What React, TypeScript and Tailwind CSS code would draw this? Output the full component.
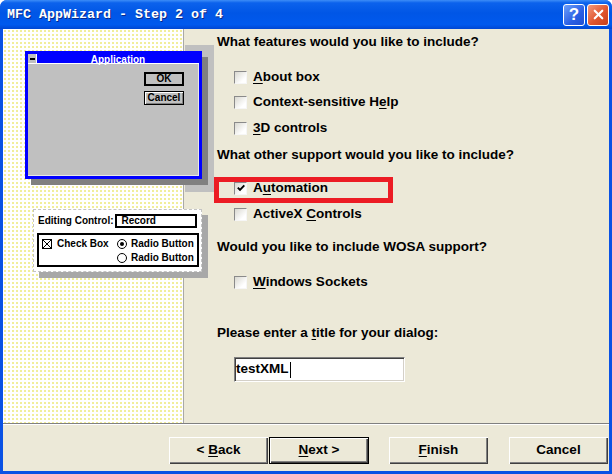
import type { ReactNode } from "react";
import { X } from "lucide-react";

const ui = "font-['Liberation_Sans',Arial,sans-serif] font-bold text-[13.5px] text-black";
const pixel = "font-['Liberation_Sans',Arial,sans-serif] font-bold text-[10px] leading-none text-black";

function CheckBox({ checked = false }: { checked?: boolean }) {
  return (
    <span className="flex h-[13px] w-[13px] shrink-0 items-center justify-center border border-t-[#8a8a8a] border-l-[#8a8a8a] border-r-[#f6f6f6] border-b-[#f6f6f6] bg-[linear-gradient(135deg,#d9d8d0,#ffffff_75%)]">
      {checked && (
        <svg viewBox="0 0 8 8" className="h-[8px] w-[8px]">
          <path d="M0.8 3.6 L3 5.9 L7.3 1.3" fill="none" stroke="#000" strokeWidth="1.9" />
        </svg>
      )}
    </span>
  );
}

function Option({ children, checked, className = "" }: { children: ReactNode; checked?: boolean; className?: string }) {
  return (
    <div className={`relative ml-[17px] flex h-[20px] items-center gap-[6px] ${className}`}>
      <CheckBox checked={checked} />
      <span>{children}</span>
    </div>
  );
}

function WizardButton({ children, main = false, className = "" }: { children: ReactNode; main?: boolean; className?: string }) {
  return (
    <button
      type="button"
      className={`flex h-[27px] items-center justify-center bg-[#ece9d8] ${
        main
          ? "w-[100px] border border-black shadow-[inset_1px_1px_0_#ffffff,inset_-1px_-1px_0_#404040,inset_-2px_-2px_0_#808080]"
          : "w-[99px] shadow-[inset_1px_1px_0_#ffffff,inset_-1px_-1px_0_#404040,inset_-2px_-2px_0_#808080]"
      } ${className}`}
    >
      <span>{children}</span>
    </button>
  );
}

function u(ch: string) {
  return <span className="underline underline-offset-2">{ch}</span>;
}

export default function App() {
  return (
    <div className="h-[474px] w-[612px] bg-white">
      <div className="flex h-full w-full flex-col overflow-hidden rounded-t-[7px] bg-[#0a52e4]">
        <header className="flex h-[29px] shrink-0 items-center bg-[linear-gradient(to_bottom,#3d8df7_0%,#0c62ec_10%,#0056e6_45%,#0059ee_85%,#0046d2_100%)] pl-[7px] pr-[3px]">
          <span className="font-['Liberation_Mono','DejaVu_Sans_Mono',monospace] text-[13.33px] font-bold text-white [text-shadow:1px_1px_0_#0a2a8a]">
            MFC AppWizard - Step 2 of 4
          </span>
          <div className="ml-auto flex gap-[2px]">
            <span className="flex h-[22px] w-[22px] items-center justify-center rounded-[3px] border border-white bg-[linear-gradient(135deg,#6ea0fa,#2a5fe4_60%,#1f4fd2)] font-['Liberation_Sans',Arial,sans-serif] text-[17px] font-bold leading-none text-white">
              ?
            </span>
            <span className="flex h-[22px] w-[22px] items-center justify-center rounded-[3px] border border-white bg-[linear-gradient(135deg,#f39a7c,#e0562f_55%,#c8401c)]">
              <X className="h-[15px] w-[15px] text-white" strokeWidth={3.5} />
            </span>
          </div>
        </header>

        <div className={`mx-[3px] mb-[3px] flex flex-1 flex-col bg-[#ece9d8] ${ui}`}>
          <div className="flex h-[394px]">
            {/* picture pane */}
            <div className="relative z-10 w-[181px] shrink-0 border-r border-[#a8a8a8] bg-white bg-[radial-gradient(circle,#f1ee9a_0.8px,transparent_0.9px)] bg-[length:4px_4px] pt-[22px]">
              <div className="absolute left-[182px] top-[16px] h-[147px] w-[29px] bg-[#c0c0c0]" />

              <div className="relative ml-[22px] flex h-[128px] w-[177px] flex-col border-[3px] border-[#0000ff] bg-[#c0c0c0] shadow-[6px_6px_0_#808080]">
                <div className="flex h-[10px] border-b border-white bg-[#0000ff]">
                  <span className="flex w-[9px] items-center justify-center border-r border-white bg-[#c0c0c0]">
                    <span className="h-[2px] w-[5px] bg-black" />
                  </span>
                  <span className={`${pixel} flex-1 pt-[1px] text-center text-[9.5px] text-white`}>Application</span>
                </div>
                <div className="flex flex-1 flex-col items-end gap-[5px] border-r border-b border-[#e8e8e8] pr-[14px] pt-[8px]">
                  <span className={`${pixel} flex h-[14px] w-[40px] items-center justify-center border-2 border-black bg-[#c0c0c0]`}>OK</span>
                  <span className={`${pixel} flex h-[14px] w-[40px] items-center justify-center border border-black bg-[#c0c0c0] shadow-[inset_1px_1px_0_#fff,inset_-1px_-1px_0_#808080]`}>
                    Cancel
                  </span>
                </div>
              </div>

              <div className={`${pixel} relative ml-[30px] mt-[30px] h-[63px] w-[169px] border border-dashed border-[#c4c4c4] bg-white px-[4px] pt-[4px] shadow-[6px_6px_0_#a8a8a8]`}>
                <div className="flex h-[14px] items-center">
                  <span className="w-[78px]">Editing Control:</span>
                  <span className="flex h-[14px] w-[82px] items-center border-2 border-black pl-[4px]">Record</span>
                </div>
                <div className="ml-[-1px] mt-[5px] flex h-[34px] w-[162px] border-2 border-black">
                  <div className="flex w-[78px] items-start pl-[3px] pt-[2px]">
                    <span className="flex h-[14px] items-center gap-[5px]">
                      <span className="relative h-[10px] w-[10px] border border-black">
                        <svg viewBox="0 0 8 8" className="absolute inset-0 h-full w-full">
                          <path d="M0 0 L8 8 M8 0 L0 8" stroke="#000" strokeWidth="1" />
                        </svg>
                      </span>
                      <span>Check Box</span>
                    </span>
                  </div>
                  <div className="flex flex-col pt-[2px]">
                    <span className="flex h-[14px] items-center gap-[4px]">
                      <span className="flex h-[10px] w-[10px] items-center justify-center rounded-full border border-black">
                        <span className="h-[4px] w-[4px] rounded-full bg-black" />
                      </span>
                      <span>Radio Button</span>
                    </span>
                    <span className="flex h-[14px] items-center gap-[4px]">
                      <span className="h-[10px] w-[10px] rounded-full border border-black" />
                      <span>Radio Button</span>
                    </span>
                  </div>
                </div>
              </div>
            </div>

            {/* options */}
            <div className="flex flex-1 flex-col pl-[33px]">
              <div className="mt-[3px] flex h-[20px] items-center">What features would you like to include?</div>
              <Option className="mt-[15px]">{u("A")}bout box</Option>
              <Option className="mt-[5px]">Context-sensitive H{u("e")}lp</Option>
              <Option className="mt-[6px]">{u("3")}D controls</Option>
              <div className="mt-[7px] flex h-[20px] items-center">What other support would you like to include?</div>
              <Option checked className="mt-[13px]">
                A{u("u")}tomation
                <span className="absolute left-[-20px] top-[-1px] h-[26px] w-[179px] border-[5px] border-[#ec1c24]" />
              </Option>
              <Option className="mt-[6px]">ActiveX {u("C")}ontrols</Option>
              <div className="mt-[13px] flex h-[20px] items-center">Would you like to include WOSA support?</div>
              <Option className="mt-[15px]">{u("W")}indows Sockets</Option>
              <div className="mt-[31px] flex h-[20px] items-center">
                <span>Please enter a {u("t")}itle for your dialog:</span>
              </div>
              <div className="ml-[17px] mt-[14px] flex h-[25px] w-[171px] items-center border border-t-[#808080] border-l-[#808080] border-r-white border-b-white bg-white pl-[1px] shadow-[inset_1px_1px_0_#404040,inset_-1px_-1px_0_#d4d0c8]">
                <span>testXML</span>
                <span className="ml-[1px] h-[16px] w-[1px] bg-black" />
              </div>
            </div>
          </div>

          <div className="h-[2px] border-t border-[#808080] bg-white" />

          <div className="flex flex-1 items-start pl-[166px] pt-[12px]">
            <WizardButton>&lt; {u("B")}ack</WizardButton>
            <WizardButton main className="ml-[1px]">{u("N")}ext &gt;</WizardButton>
            <WizardButton className="ml-[20px]">{u("F")}inish</WizardButton>
            <WizardButton className="ml-[21px]">Cancel</WizardButton>
          </div>
        </div>
      </div>
    </div>
  );
}
